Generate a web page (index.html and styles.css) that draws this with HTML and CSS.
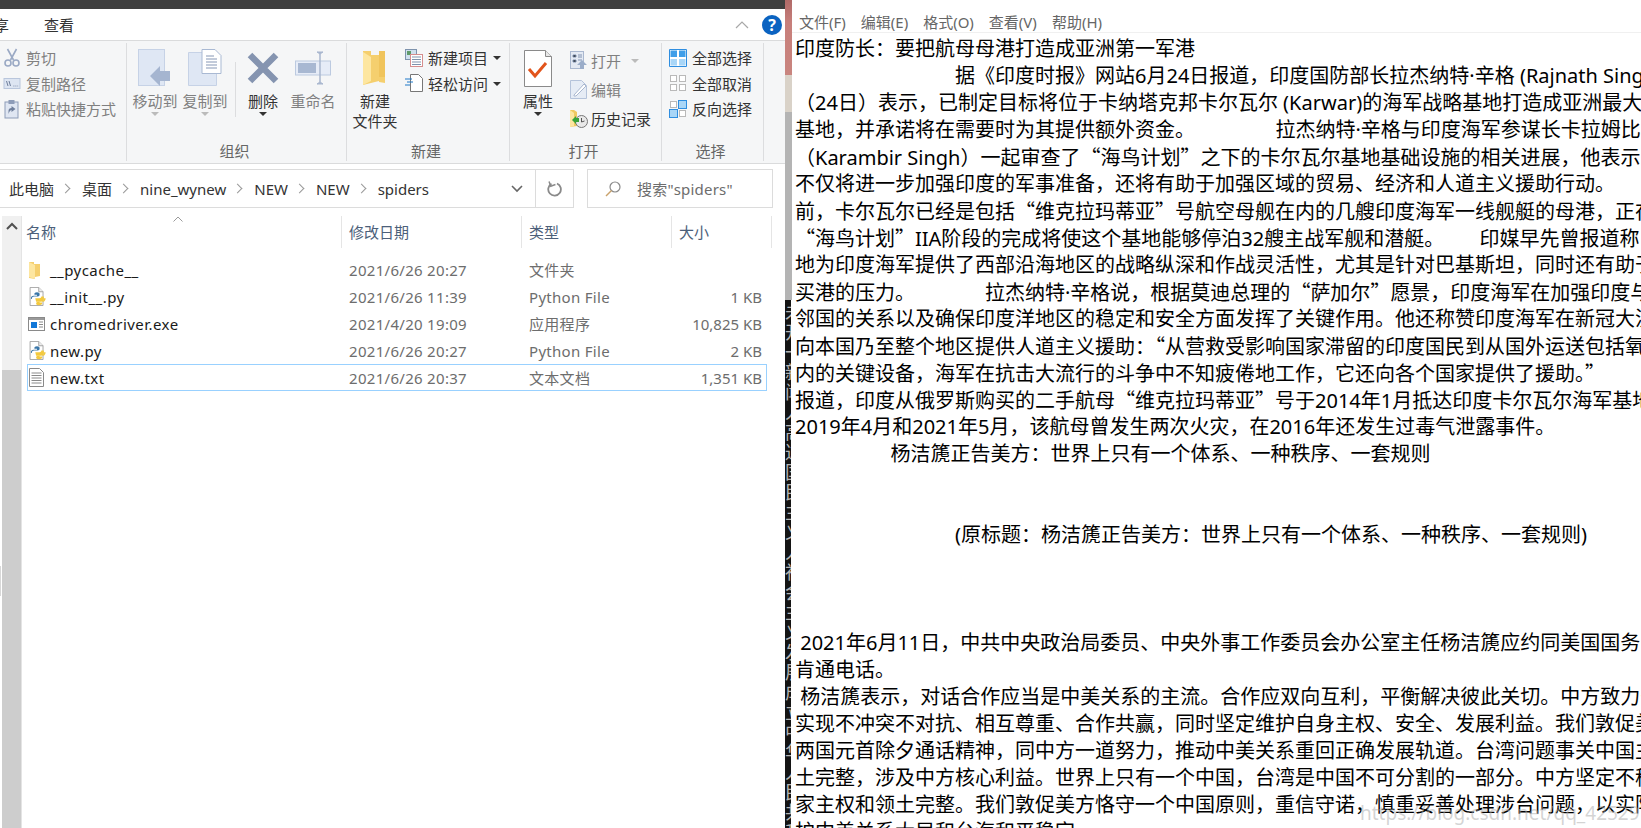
FILE: index.html
```html
<!DOCTYPE html>
<html lang="zh">
<head>
    <meta charset="UTF-8">
    <title>new.txt</title>
    <link rel="stylesheet" href="styles.css">
</head>
<body>
    <svg class="defs" width="0" height="0">
        <symbol id="py" viewBox="0 0 18 22">
            <path d="M1 .5h10l5 5v16H1z" fill="#fff" stroke="#9a9a9a"/>
            <path d="M11 .5v5h5" fill="#eee" stroke="#9a9a9a"/>
            <path d="M3 14c0-3 2-3 4-3h3c1 0 2-1 2-2V8c0-1-1-2-3-2S6 7 6 8v1h3v1H5c-2 0-3 1-3 3v1z" fill="#3a76a8"/>
            <path d="M17 13c0 3-2 4-4 4h-3c-1 0-2 1-2 2s1 2 3 2 4-1 4-2v-1h-3v-1h4c2 0 3-2 3-4z" fill="#f3c93e"/>
            <path d="M7 13h5c1 0 2-1 2-2h3v3c0 2-2 3-4 3H8z" fill="#f3c93e"/>
        </symbol>
    </svg>

    <div class="explorer">
        <div class="titlebar"></div>
        <div class="tabs">
            <span class="tab-cut">享</span>
            <span class="tab">查看</span>
            <svg class="collapse" width="14" height="8" viewBox="0 0 14 8"><path d="M1 7l6-6 6 6" fill="none" stroke="#a8a8a8" stroke-width="1.2"/></svg>
            <span class="help">?</span>
        </div>

        <div class="ribbon">
            <div class="group g-clip">
                <div class="group-body col">
                    <div class="small off">
                        <svg width="17" height="19" viewBox="0 0 17 19"><g fill="none" stroke="#9aa9c4" stroke-width="1.6"><path d="M4 1l6 11M13 1L7 12"/><circle cx="4.5" cy="15" r="3"/><circle cx="12.5" cy="15" r="3"/></g></svg>
                        <span>剪切</span>
                    </div>
                    <div class="small off">
                        <svg width="17" height="11" viewBox="0 0 17 11"><rect x=".5" y=".5" width="16" height="10" fill="#dde5f2" stroke="#b9c6dc"/><path d="M3 3l1.5 5M5.5 3L7 8M10 8h.8M12 8h.8M14 8h.6" stroke="#6f7f9c" fill="none"/></svg>
                        <span>复制路径</span>
                    </div>
                    <div class="small off">
                        <svg width="17" height="20" viewBox="0 0 17 20"><rect x="1.5" y="3" width="13" height="16" fill="#dfe6f2" stroke="#8d9cb8"/><rect x="5" y="1" width="6" height="4" fill="#8d9cb8"/><path d="M5 15v-3c0-2 1-3 3-3V7l4 3-4 3v-2c-1 0-2 1-3 4z" fill="#6f7f9c"/></svg>
                        <span>粘贴快捷方式</span>
                    </div>
                </div>
                <div class="group-label"></div>
            </div>

            <div class="group g-organize">
                <div class="group-body">
                    <div class="big off">
                        <div class="big-icon">
                            <svg width="34" height="38" viewBox="0 0 34 38"><rect x=".5" y=".5" width="26" height="36" fill="#dfe7f4" stroke="#c6d2e6"/><path d="M12 27L22 17v5h10v10H22v5z" fill="#a5b5d0"/></svg>
                        </div>
                        <span>移动到</span>
                        <i class="caret gray"></i>
                    </div>
                    <div class="big off">
                        <div class="big-icon">
                            <svg width="34" height="38" viewBox="0 0 34 38"><path d="M.5 3.500h28v33H.5z" fill="#dfe7f4" stroke="#c6d2e6"/><path d="M14 .5h13l6 6v18H14z" fill="#fff" stroke="#a9b9d3"/><path d="M18 7h8M18 10h11M18 13h11M18 16h11M18 19h11" stroke="#8697b5"/></svg>
                        </div>
                        <span>复制到</span>
                        <i class="caret gray"></i>
                    </div>
                    <div class="group-sep"></div>
                    <div class="big">
                        <div class="big-icon">
                            <svg width="32" height="32" viewBox="0 0 32 32"><path d="M3 3l26 26M29 3L3 29" stroke="#8594b0" stroke-width="6.500" fill="none"/></svg>
                        </div>
                        <span>删除</span>
                        <i class="caret"></i>
                    </div>
                    <div class="big off">
                        <div class="big-icon">
                            <svg width="36" height="34" viewBox="0 0 36 34"><rect x=".5" y="10" width="35" height="14" fill="#e6ecf7" stroke="#bccae0"/><rect x="3" y="12" width="18" height="10" fill="#a8b8d2"/><path d="M22 1h6l-3 2v28l3 2h-6l3-2V3z" fill="#a9b7cf" stroke="#a9b7cf"/></svg>
                        </div>
                        <span>重命名</span>
                    </div>
                </div>
                <div class="group-label">组织</div>
            </div>

            <div class="group g-new">
                <div class="group-body">
                    <div class="big">
                        <div class="big-icon">
                            <svg width="24" height="35" viewBox="0 0 24 35"><path d="M0 0h8v4h14v28l-6-1v-1L0 34z" fill="#f5cf6e"/><path d="M0 1l8 5v24l-8 4z" fill="#fde6a0"/><path d="M16 0h6v26h-6z" fill="#f0c45c"/></svg>
                        </div>
                        <span>新建</span>
                        <span>文件夹</span>
                    </div>
                    <div class="col new-col">
                        <div class="small">
                            <svg width="18" height="18" viewBox="0 0 18 18"><rect x=".5" y=".5" width="11" height="10" fill="#cfe0ee" stroke="#7e93ad"/><rect x="2" y="2" width="4" height="4" fill="#5f9a6a"/><rect x="5.500" y="5.500" width="12" height="12" fill="#fff" stroke="#d58e8e"/><path d="M7 8h9M7 10.500h9M7 13h9M7 15.500h9" stroke="#7e93ad"/></svg>
                            <span>新建项目</span>
                            <i class="caret side"></i>
                        </div>
                        <div class="small">
                            <svg width="18" height="18" viewBox="0 0 18 18"><path d="M5.500.5h8l4 4v13h-12z" fill="#fff" stroke="#777"/><path d="M0 5h7M2 8h6M0 11h5" stroke="#1e78c8"/></svg>
                            <span>轻松访问</span>
                            <i class="caret side"></i>
                        </div>
                    </div>
                </div>
                <div class="group-label">新建</div>
            </div>

            <div class="group g-open">
                <div class="group-body">
                    <div class="big">
                        <div class="big-icon">
                            <svg width="28" height="37" viewBox="0 0 28 37"><path d="M.5.5h21l6 6v30H.5z" fill="#fff" stroke="#8a8a8a"/><path d="M21.500.5v6h6" fill="#e8e8e8" stroke="#8a8a8a"/><path d="M5 19l6 7 11-13" fill="none" stroke="#e2541b" stroke-width="3"/></svg>
                        </div>
                        <span>属性</span>
                        <i class="caret"></i>
                    </div>
                    <div class="col open-col">
                        <div class="small tall off">
                            <svg width="18" height="19" viewBox="0 0 18 19"><rect x=".5" y=".5" width="13" height="17" fill="#e3e9f3" stroke="#a9b7cf"/><path d="M3 4h3v2H3zM3 9h3v2H3zM8 4h4M8 6h4M8 9h4" stroke="#8294b2"/><path d="M12 9l5 5h-3v4h-4v-4H7z" fill="#9badc9"/></svg>
                            <span>打开</span>
                            <i class="caret side gray open-caret"></i>
                        </div>
                        <div class="small tall off">
                            <svg width="18" height="19" viewBox="0 0 18 19"><path d="M.5.5h11l5 5v13H.5z" fill="#e6ecf5" stroke="#b5c3da"/><path d="M4 15l10-11 2 2-10 10H4z" fill="#fff" stroke="#a9b7cf"/></svg>
                            <span>编辑</span>
                        </div>
                        <div class="small tall">
                            <svg width="18" height="19" viewBox="0 0 18 19"><path d="M0 1h4l3 2v14l-7 1z" fill="#f0c860"/><path d="M0 1l4 3v13l-4 1z" fill="#fde6a0"/><circle cx="11.500" cy="12.500" r="6" fill="#e8e8e8" stroke="#777"/><path d="M11.500 9v4l3-1" stroke="#555" fill="none"/><path d="M2 11l4-4v2h3v4H6v2z" fill="#3aa33a"/></svg>
                            <span>历史记录</span>
                        </div>
                    </div>
                </div>
                <div class="group-label">打开</div>
            </div>

            <div class="group g-select">
                <div class="group-body col">
                    <div class="small">
                        <svg width="18" height="18" viewBox="0 0 18 18"><path d="M.5.500h17v17H.5z" fill="#fff" stroke="#2f8ee0"/><rect x="1.500" y="1.500" width="6.500" height="6.500" fill="#3f9ee8"/><rect x="10" y="1.500" width="6.500" height="6.500" fill="#3f9ee8"/><rect x="1.500" y="10" width="6.500" height="6.500" fill="#a9d6f7"/><rect x="10" y="10" width="6.500" height="6.500" fill="#a9d6f7"/></svg>
                        <span>全部选择</span>
                    </div>
                    <div class="small">
                        <svg width="18" height="18" viewBox="0 0 18 18"><g fill="#fff" stroke="#b9b9b9"><rect x="1.500" y="1.500" width="6" height="6"/><rect x="10.500" y="1.500" width="6" height="6"/><rect x="1.500" y="10.500" width="6" height="6"/><rect x="10.500" y="10.500" width="6" height="6"/></g></svg>
                        <span>全部取消</span>
                    </div>
                    <div class="small">
                        <svg width="18" height="18" viewBox="0 0 18 18"><g fill="#fff" stroke="#b9b9b9"><rect x="1.500" y="1.500" width="6" height="6"/><rect x="10.500" y="10.500" width="6" height="6"/></g><rect x="9.500" y=".5" width="8" height="8" fill="#a9d6f7" stroke="#2f8ee0"/><rect x=".5" y="9.500" width="8" height="8" fill="#a9d6f7" stroke="#2f8ee0"/></svg>
                        <span>反向选择</span>
                    </div>
                </div>
                <div class="group-label">选择</div>
            </div>
        </div>

        <div class="addressbar">
            <div class="crumbs">
                <span>此电脑</span><i class="chev"></i>
                <span>桌面</span><i class="chev"></i>
                <span>nine_wynew</span><i class="chev"></i>
                <span>NEW</span><i class="chev"></i>
                <span>NEW</span><i class="chev"></i>
                <span>spiders</span>
                <svg class="drop" width="12" height="8" viewBox="0 0 12 8"><path d="M1 1l5 5 5-5" fill="none" stroke="#666" stroke-width="1.600"/></svg>
            </div>
            <div class="refresh">
                <svg width="16" height="16" viewBox="0 0 16 16"><path d="M10 2.500a6.300 6.300 0 1 1-5.500.3" fill="none" stroke="#8a8a8a" stroke-width="1.800"/><path d="M3 0v5h5" fill="none" stroke="#8a8a8a" stroke-width="1.500" transform="rotate(-20 4 3)"/></svg>
            </div>
            <div class="search">
                <svg width="16" height="16" viewBox="0 0 16 16"><circle cx="10" cy="6" r="5" fill="none" stroke="#8a8a8a" stroke-width="1.200"/><path d="M6.500 9.500L1 15" stroke="#c9a26b" stroke-width="1.400"/></svg>
                <span>搜索"spiders"</span>
            </div>
        </div>

        <div class="pane">
            <div class="scroll">
                <svg class="scroll-up" width="12" height="8" viewBox="0 0 12 8"><path d="M1 7l5-5 5 5" fill="none" stroke="#505050" stroke-width="2"/></svg>
                <div class="scroll-thumb"></div>
            </div>
            <div class="list">
                <div class="head">
                    <div class="hcell first">名称</div>
                    <div class="hcell">修改日期</div>
                    <div class="hcell">类型</div>
                    <div class="hcell">大小</div>
                    <svg class="sort" width="10" height="6" viewBox="0 0 10 6"><path d="M.5 5.500L5 1l4.500 4.500" fill="none" stroke="#9a9a9a"/></svg>
                </div>
                <div class="rows">
                    <div class="row">
                        <div class="fname">
                            <svg width="18" height="18" viewBox="0 0 18 18"><path d="M1 1h5v2h6v12l-5 1v2l-6-1z" fill="#f5cf6e"/><path d="M1 1l6 3v14l-6-2z" fill="#fde6a0"/></svg>
                            <span>__pycache__</span>
                        </div>
                        <div>2021/6/26 20:27</div><div>文件夹</div><div class="fsize"></div>
                    </div>
                    <div class="row">
                        <div class="fname"><svg width="18" height="19"><use href="#py"/></svg><span>__init__.py</span></div>
                        <div>2021/6/26 11:39</div><div>Python File</div><div class="fsize">1 KB</div>
                    </div>
                    <div class="row">
                        <div class="fname">
                            <svg width="18" height="14" viewBox="0 0 18 14"><rect x=".5" y=".5" width="16" height="13" fill="#fff" stroke="#8a8a8a"/><rect x="1" y="1" width="15" height="2" fill="#9a9a9a"/><rect x="3" y="5" width="6" height="6" fill="#1278d8"/><path d="M11 5h4M11 7.500h4M11 10h4" stroke="#8a8a8a"/></svg>
                            <span>chromedriver.exe</span>
                        </div>
                        <div>2021/4/20 19:09</div><div>应用程序</div><div class="fsize">10,825 KB</div>
                    </div>
                    <div class="row">
                        <div class="fname"><svg width="18" height="19"><use href="#py"/></svg><span>new.py</span></div>
                        <div>2021/6/26 20:27</div><div>Python File</div><div class="fsize">2 KB</div>
                    </div>
                    <div class="row selected">
                        <div class="fname">
                            <svg width="18" height="19" viewBox="0 0 18 19"><path d="M1.500.5h10l4 4v14h-14z" fill="#fff" stroke="#8a8a8a"/><path d="M3.500 5h10M3.500 7.500h10M3.500 10h10M3.500 12.500h10M3.500 15h10" stroke="#8a8a8a"/></svg>
                            <span>new.txt</span>
                        </div>
                        <div>2021/6/26 20:37</div><div>文本文档</div><div class="fsize">1,351 KB</div>
                    </div>
                </div>
            </div>
        </div>
        <div class="edge-handle"></div>
    </div>

    <div class="strip">
        <div class="strip-top"></div>
        <div class="strip-tan"></div>
        <div class="strip-gray"></div>
        <div class="strip-dark">未开一新闻人高达国民主义人社会主义发展成立中华人民共和国的新时代大家一起努力实现中国目标未开一新闻人高达国民主义人社会主义发展成立</div>
    </div>

    <div class="notepad">
        <div class="menu">
            <span>文件(F)</span><span>编辑(E)</span><span>格式(O)</span><span>查看(V)</span><span>帮助(H)</span>
        </div>
        <div class="doc">
            <div class="line">印度防长：要把航母母港打造成亚洲第一军港</div>
            <div class="line">　　　　　　　　据《印度时报》网站6月24日报道，印度国防部长拉杰纳特·辛格 (Rajnath Sing</div>
            <div class="line">（24日）表示，已制定目标将位于卡纳塔克邦卡尔瓦尔 (Karwar)的海军战略基地打造成亚洲最大</div>
            <div class="line">基地，并承诺将在需要时为其提供额外资金。　　　　  拉杰纳特·辛格与印度海军参谋长卡拉姆比</div>
            <div class="line">（Karambir Singh）一起审查了<span class="q">“</span>海鸟计划<span class="q">”</span>之下的卡尔瓦尔基地基础设施的相关进展，他表示</div>
            <div class="line">不仅将进一步加强印度的军事准备，还将有助于加强区域的贸易、经济和人道主义援助行动。</div>
            <div class="line">前，卡尔瓦尔已经是包括<span class="q">“</span>维克拉玛蒂亚<span class="q">”</span>号航空母舰在内的几艘印度海军一线舰艇的母港，正在</div>
            <div class="line"><span class="q">“</span>海鸟计划<span class="q">”</span>IIA阶段的完成将使这个基地能够停泊32艘主战军舰和潜艇。　　 印媒早先曾报道称</div>
            <div class="line">地为印度海军提供了西部沿海地区的战略纵深和作战灵活性，尤其是针对巴基斯坦，同时还有助于</div>
            <div class="line">买港的压力。　　　　拉杰纳特·辛格说，根据莫迪总理的<span class="q">“</span>萨加尔<span class="q">”</span>愿景，印度海军在加强印度与</div>
            <div class="line">邻国的关系以及确保印度洋地区的稳定和安全方面发挥了关键作用。他还称赞印度海军在新冠大流</div>
            <div class="line">向本国乃至整个地区提供人道主义援助：<span class="q">“</span>从营救受影响国家滞留的印度国民到从国外运送包括氧</div>
            <div class="line">内的关键设备，海军在抗击大流行的斗争中不知疲倦地工作，它还向各个国家提供了援助。<span class="q">”</span></div>
            <div class="line">报道，印度从俄罗斯购买的二手航母<span class="q">“</span>维克拉玛蒂亚<span class="q">”</span>号于2014年1月抵达印度卡尔瓦尔海军基地</div>
            <div class="line">2019年4月和2021年5月，该航母曾发生两次火灾，在2016年还发生过毒气泄露事件。</div>
            <div class="line">　　　　   杨洁篪正告美方：世界上只有一个体系、一种秩序、一套规则</div>
            <div class="line"> </div>
            <div class="line"> </div>
            <div class="line">　　　　　　　　(原标题：杨洁篪正告美方：世界上只有一个体系、一种秩序、一套规则)</div>
            <div class="line"> </div>
            <div class="line"> </div>
            <div class="line"> </div>
            <div class="line"> 2021年6月11日，中共中央政治局委员、中央外事工作委员会办公室主任杨洁篪应约同美国国务</div>
            <div class="line">肯通电话。</div>
            <div class="line"> 杨洁篪表示，对话合作应当是中美关系的主流。合作应双向互利，平衡解决彼此关切。中方致力于</div>
            <div class="line">实现不冲突不对抗、相互尊重、合作共赢，同时坚定维护自身主权、安全、发展利益。我们敦促美</div>
            <div class="line">两国元首除夕通话精神，同中方一道努力，推动中美关系重回正确发展轨道。台湾问题事关中国主</div>
            <div class="line">土完整，涉及中方核心利益。世界上只有一个中国，台湾是中国不可分割的一部分。中方坚定不移</div>
            <div class="line">家主权和领土完整。我们敦促美方恪守一个中国原则，重信守诺，慎重妥善处理涉台问题，以实际</div>
            <div class="line">护中美关系大局和台海和平稳定。</div>
        </div>
        <div class="watermark">https://blog.csdn.net/qq_42529</div>
    </div>
</body>
</html>
```

FILE: styles.css
```css
html, body {
    margin: 0;
    height: 100%;
    overflow: hidden;
}

body {
    display: flex;
    background-color: #fff;
    color: #333;
    font-family: "Noto Sans", "Noto Sans CJK SC", sans-serif;
    font-size: 15px;
}

.defs {
    position: absolute;
}

svg {
    display: block;
    flex-shrink: 0;
}

/* 资源管理器 */
.explorer {
    position: relative;
    width: 785px;
    height: 828px;
    flex-shrink: 0;
    overflow: hidden;
}

.titlebar {
    height: 9px;
    background-color: #3f3f3f;
}

.tabs {
    display: flex;
    align-items: center;
    height: 31px;
    background-color: #fff;
}

.tab-cut {
    width: 9px;
    overflow: hidden;
    direction: rtl;
}

.tab {
    margin-left: 35px;
}

.collapse {
    margin-left: auto;
    margin-right: 13px;
}

.help {
    width: 20px;
    height: 20px;
    margin-right: 3px;
    border-radius: 50%;
    background-color: #0b63c1;
    color: #fff;
    font-weight: bold;
    font-size: 16px;
    line-height: 20px;
    text-align: center;
}

/* ribbon */
.ribbon {
    display: flex;
    height: 122px;
    background-color: #f5f6f7;
    border-top: 1px solid #dadbdc;
    border-bottom: 1px solid #dadbdc;
}

.group {
    display: flex;
    flex-direction: column;
    height: 118px;
    margin-top: 2px;
    box-sizing: border-box;
    border-right: 1px solid #dcdddf;
}

.g-clip { width: 127px; }
.g-organize { width: 220px; }
.g-new { width: 163px; }
.g-open { width: 152px; }
.g-select { width: 102px; }

.group-body {
    display: flex;
    height: 98px;
    padding-top: 2px;
    box-sizing: border-box;
}

.col {
    display: flex;
    flex-direction: column;
}

.group-label {
    height: 20px;
    padding-right: 4px;
    line-height: 20px;
    text-align: center;
    color: #666;
}

.g-clip .group-body,
.g-organize .group-body,
.g-new .group-body,
.g-open .group-body {
    padding-left: 3px;
}

.g-select .group-body {
    padding-left: 7px;
}

.big {
    display: flex;
    flex-direction: column;
    align-items: center;
    width: 50px;
    line-height: 20px;
    color: #333;
}

.big-icon {
    display: flex;
    align-items: center;
    justify-content: center;
    height: 46px;
}

.off,
.off span {
    color: #808080;
}

.group-sep {
    width: 1px;
    height: 55px;
    margin: 17px 2px 0 5px;
    background-color: #dcdddf;
}

.small {
    display: flex;
    align-items: center;
    gap: 5px;
    height: 25.500px;
    white-space: nowrap;
}

.small svg {
    width: 18px;
}

.small.tall {
    height: 29px;
    gap: 3px;
}

.new-col {
    margin-left: 5px;
}

.open-col {
    margin-left: 7px;
    padding-top: 1px;
}

.caret {
    display: block;
    width: 0;
    height: 0;
    margin-top: 1px;
    border-left: 4px solid transparent;
    border-right: 4px solid transparent;
    border-top: 4px solid #333;
}

.caret.gray {
    border-top-color: #bbb;
}

.caret.side {
    margin-left: 0;
}

.caret.open-caret {
    margin-left: 7px;
}

/* 地址栏 */
.addressbar {
    display: flex;
    height: 39px;
    margin-top: 5px;
    box-sizing: border-box;
}

.crumbs {
    display: flex;
    align-items: center;
    width: 535px;
    padding-left: 9px;
    box-sizing: border-box;
    border-top: 1px solid #dcdcdc;
    border-bottom: 1px solid #dcdcdc;
}

.chev {
    display: block;
    width: 6px;
    height: 6px;
    margin: 0 13px 0 8px;
    border-top: 1.500px solid #999;
    border-right: 1.500px solid #999;
    transform: rotate(45deg);
}

.drop {
    margin-left: auto;
    margin-right: 12px;
}

.refresh {
    display: flex;
    align-items: center;
    justify-content: center;
    width: 39px;
    box-sizing: border-box;
    border: 1px solid #dcdcdc;
}

.search {
    display: flex;
    align-items: center;
    gap: 16px;
    width: 186px;
    margin-left: 13px;
    padding-left: 17px;
    box-sizing: border-box;
    border: 1px solid #dcdcdc;
    color: #6d6d6d;
    letter-spacing: 0.2px;
    white-space: nowrap;
}

/* 文件列表 */
.pane {
    display: flex;
    height: 620px;
    margin-top: 8px;
    margin-left: 2px;
}

.scroll {
    width: 19px;
    background-color: #f0f0f0;
    border-right: 1px solid #e4e4e4;
    display: flex;
    flex-direction: column;
    align-items: center;
}

.scroll-up {
    margin-top: 6px;
}

.scroll-thumb {
    align-self: stretch;
    height: 460px;
    margin-top: 140px;
    background-color: #cdcdcd;
}

.list {
    width: 760px;
    margin-left: 3px;
}

.head {
    position: relative;
    display: grid;
    grid-template-columns: 317px 180px 150px 100px;
    height: 32px;
    color: #4c607a;
}

.hcell {
    padding-left: 7px;
    line-height: 32px;
    border-right: 1px solid #e5e5e5;
}

.hcell.first {
    padding-left: 1px;
}

.sort {
    position: absolute;
    left: 148px;
    top: 0;
}

.rows {
    margin-top: 8px;
    margin-left: 2px;
    width: 740px;
}

.row {
    display: grid;
    grid-template-columns: 321px 180px 150px 83px;
    align-items: center;
    height: 27px;
    box-sizing: border-box;
    border: 1px solid transparent;
    color: #6d6d6d;
    letter-spacing: 0.3px;
}

.row.selected {
    border-color: #99d1ff;
}

.fname {
    display: flex;
    align-items: center;
    gap: 4px;
    color: #1a1a1a;
    letter-spacing: 0.45px;
}

.fsize {
    text-align: right;
    letter-spacing: 0;
}

.edge-handle {
    position: absolute;
    left: 0;
    top: 566px;
    width: 1px;
    height: 30px;
    background-color: #d8d8d8;
}

/* 中间被遮挡的窗口 */
.strip {
    display: flex;
    flex-direction: column;
    width: 7px;
    height: 828px;
    flex-shrink: 0;
    overflow: hidden;
}

.strip-top {
    height: 75px;
    background: linear-gradient(#b06a68 0, #c77f7b 30%, #c9857f 100%);
}

.strip-tan {
    height: 37px;
    background-color: #d9d2c8;
}

.strip-gray {
    height: 188px;
    background-color: #b4b4b4;
}

.strip-dark {
    flex: 1;
    width: 6px;
    padding-top: 2px;
    background-color: #141414;
    color: #b5b5b5;
    font-size: 18px;
    line-height: 20px;
    overflow: hidden;
    word-break: break-all;
}

/* 记事本 */
.notepad {
    position: relative;
    flex: 1;
    min-width: 0;
    overflow: hidden;
}

.menu {
    display: flex;
    gap: 15px;
    height: 33px;
    padding: 9px 0 0 7px;
    box-sizing: border-box;
    border-bottom: 1px solid #f0f0f0;
    color: #666;
    font-size: 15px;
    line-height: 26px;
}

.doc {
    padding: 1.500px 0 0 3px;
    color: #000;
    font-size: 20px;
}

.line {
    height: 27px;
    line-height: 27px;
    white-space: pre;
}

.q {
    font-family: "Noto Sans CJK SC", sans-serif;
}

.watermark {
    position: absolute;
    left: 568px;
    top: 800px;
    color: rgba(170, 170, 170, 0.5);
    font-size: 19px;
    line-height: 26px;
    white-space: nowrap;
}
```
